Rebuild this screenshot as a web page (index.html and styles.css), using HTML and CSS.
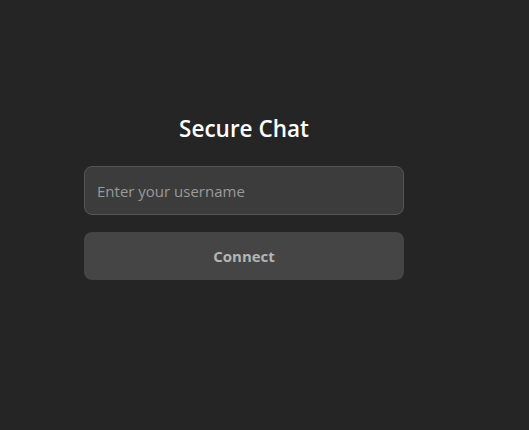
FILE: index.html
```html
<!DOCTYPE html>
<html>
<head>
<meta charset="utf-8">
<link rel="stylesheet" href="styles.css">
</head>
<body>
<div class="page">
  <div class="login">
    <h2 class="title">Secure Chat</h2>
    <input class="username" type="text" placeholder="Enter your username">
    <button class="connect">Connect</button>
  </div>
</div>
</body>
</html>
```
FILE: styles.css
```css
html, body {
  margin: 0;
  padding: 0;
  background: #252525;
  height: 100%;
}
body {
  font-family: "Open Sans", "Noto Sans", sans-serif;
}
.page {
  display: flex;
  justify-content: center;
  padding-top: 112px;
  padding-right: 41px;
}
.login {
  width: 320px;
  display: flex;
  flex-direction: column;
}
.title {
  margin: 0 0 21px 0;
  text-align: center;
  color: #ffffff;
  font-size: 22.5px;
  font-weight: 600;
  line-height: 33px;
}
.username {
  box-sizing: border-box;
  height: 49px;
  margin: 0 0 17px 0;
  padding: 0 12px;
  border: 1px solid #555555;
  border-radius: 8px;
  background: #3c3c3c;
  color: #dddddd;
  font-family: inherit;
  font-size: 15px;
  outline: none;
}
.username::placeholder {
  color: #9a9a9a;
}
.connect {
  height: 48px;
  border: none;
  border-radius: 8px;
  background: #454545;
  color: #b4b4b4;
  font-family: inherit;
  font-size: 15px;
  font-weight: 700;
}
```
